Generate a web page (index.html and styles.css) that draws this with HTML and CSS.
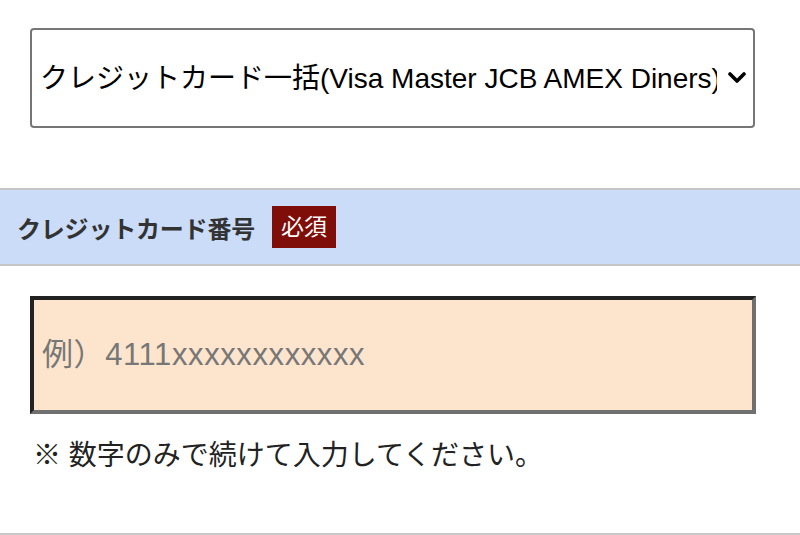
FILE: index.html
```html
<!DOCTYPE html>
<html lang="ja">
<head>
<meta charset="utf-8">
<title>クレジットカード</title>
<link rel="stylesheet" href="styles.css">
</head>
<body>
<div class="pay-select">
  <select class="pay-method" aria-label="支払い方法">
    <option>クレジットカード一括(Visa Master JCB AMEX Diners)</option>
  </select>
  <svg class="chevron" width="18" height="12" viewBox="0 0 18 12" aria-hidden="true">
    <path d="M2 2 L9 9 L16 2" fill="none" stroke="#000" stroke-width="3.6" stroke-linecap="round" stroke-linejoin="round"/>
  </svg>
</div>

<div class="section-head">
  <span class="head-label">クレジットカード番号</span>
  <span class="badge">必須</span>
</div>

<div class="section-body">
  <input class="card-input" type="text" placeholder="例）4111xxxxxxxxxxxx">
  <p class="note">※ 数字のみで続けて入力してください。</p>
</div>
</body>
</html>
```

FILE: styles.css
```css
html, body {
  margin: 0;
  padding: 0;
  background: #fff;
}

body {
  font-family: "Liberation Sans", "Noto Sans CJK JP", sans-serif;
  color: #222;
}

.pay-select {
  position: relative;
  margin: 28px 45px 0 30px;
}

.pay-method {
  appearance: none;
  -webkit-appearance: none;
  display: block;
  width: 100%;
  height: 100px;
  box-sizing: border-box;
  border: 2px solid #767676;
  border-radius: 4px;
  background: #fff;
  color: #000;
  font-family: "Liberation Sans", "Noto Sans CJK JP", sans-serif;
  font-size: 28px;
  padding: 0 36px 0 8px;
  margin: 0;
}

.chevron {
  position: absolute;
  right: 9px;
  top: 44px;
  pointer-events: none;
}

.section-head {
  margin-top: 60px;
  height: 74px;
  background: #cadcf8;
  border-top: 2px solid #c6c6c6;
  border-bottom: 2px solid #c6c6c6;
  display: flex;
  align-items: center;
  gap: 17px;
  padding-left: 17px;
}

.head-label {
  font-size: 24px;
  font-weight: bold;
  color: #333;
  letter-spacing: -0.2px;
}

.badge {
  background: #800e08;
  color: #fff;
  font-size: 23px;
  line-height: 32px;
  padding: 5px 9px;
}

.section-body {
  padding: 30px 44px 58px 30px;
  border-bottom: 2px solid #c8c8c8;
}

.card-input {
  display: block;
  width: 100%;
  height: 118px;
  box-sizing: border-box;
  margin: 0;
  border-style: solid;
  border-width: 4px;
  border-color: #222 #707070 #707070 #222;
  background: #fde5cd;
  font-family: "Liberation Sans", "Noto Sans CJK JP", sans-serif;
  font-size: 31px;
  letter-spacing: 0.6px;
  padding: 0 8px;
  color: #222;
  outline: none;
}

.card-input::placeholder {
  color: #777;
}

.note {
  margin: 22px 0 0 3px;
  font-size: 28px;
  line-height: 39px;
  color: #222;
}
```
